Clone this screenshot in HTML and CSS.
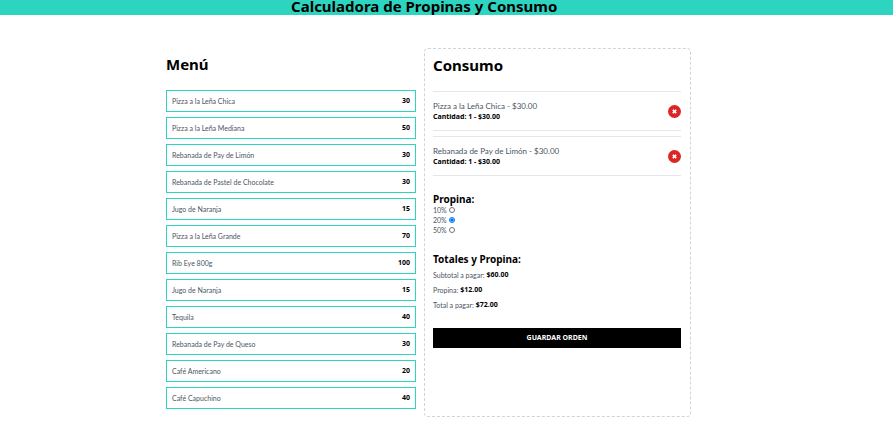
FILE: index.html
```html
<!DOCTYPE html>
<html lang="es">
<head>
<meta charset="utf-8">
<meta name="viewport" content="width=device-width, initial-scale=1">
<title>Calculadora de Propinas y Consumo</title>
<link rel="stylesheet" href="styles.css">
</head>
<body>
<header class="header">
  <h1 class="title">Calculadora de Propinas y Consumo</h1>
</header>
<main class="layout">
  <section class="menu">
    <h2 class="title">Menú</h2>
    <div class="menu-list">
      <button class="item" type="button"><span>Pizza a la Leña Chica</span><b>30</b></button>
      <button class="item" type="button"><span>Pizza a la Leña Mediana</span><b>50</b></button>
      <button class="item" type="button"><span>Rebanada de Pay de Limón</span><b>30</b></button>
      <button class="item" type="button"><span>Rebanada de Pastel de Chocolate</span><b>30</b></button>
      <button class="item" type="button"><span>Jugo de Naranja</span><b>15</b></button>
      <button class="item" type="button"><span>Pizza a la Leña Grande</span><b>70</b></button>
      <button class="item" type="button"><span>Rib Eye 800g</span><b>100</b></button>
      <button class="item" type="button"><span>Jugo de Naranja</span><b>15</b></button>
      <button class="item" type="button"><span>Tequila</span><b>40</b></button>
      <button class="item" type="button"><span>Rebanada de Pay de Queso</span><b>30</b></button>
      <button class="item" type="button"><span>Café Americano</span><b>20</b></button>
      <button class="item" type="button"><span>Café Capuchino</span><b>40</b></button>
    </div>
  </section>
  <section class="order">
    <h2 class="title">Consumo</h2>
    <ul class="order-list">
      <li class="order-item">
        <div>
          <p class="order-name">Pizza a la Leña Chica - $30.00</p>
          <p class="order-qty">Cantidad: 1 - $30.00</p>
        </div>
        <button class="remove" type="button" aria-label="Eliminar Pizza a la Leña Chica">
          <svg viewBox="0 0 6 6" aria-hidden="true"><path d="M1 1L5 5M5 1L1 5"/></svg>
        </button>
      </li>
      <li class="order-item">
        <div>
          <p class="order-name">Rebanada de Pay de Limón - $30.00</p>
          <p class="order-qty">Cantidad: 1 - $30.00</p>
        </div>
        <button class="remove" type="button" aria-label="Eliminar Rebanada de Pay de Limón">
          <svg viewBox="0 0 6 6" aria-hidden="true"><path d="M1 1L5 5M5 1L1 5"/></svg>
        </button>
      </li>
    </ul>
    <form class="checkout">
      <div class="tips">
        <h3 class="subtitle">Propina:</h3>
        <div class="tip"><label for="tip-10">10%</label><input id="tip-10" type="radio" name="tip" value="0.1"></div>
        <div class="tip"><label for="tip-20">20%</label><input id="tip-20" type="radio" name="tip" value="0.2" checked></div>
        <div class="tip"><label for="tip-50">50%</label><input id="tip-50" type="radio" name="tip" value="0.5"></div>
      </div>
      <div class="totals">
        <h3 class="subtitle">Totales y Propina:</h3>
        <p class="total"><span>Subtotal a pagar:</span> <b>$60.00</b></p>
        <p class="total"><span>Propina:</span> <b>$12.00</b></p>
        <p class="total"><span>Total a pagar:</span> <b>$72.00</b></p>
      </div>
      <button class="save" type="button">Guardar Orden</button>
    </form>
  </section>
</main>
</body>
</html>
```
FILE: styles.css
```css
* {
  box-sizing: border-box;
  margin: 0;
  padding: 0;
}

body {
  font-family: Lato, "Noto Sans", sans-serif;
  font-size: 7px;
  line-height: 10px;
  color: #4b5563;
  background: #fff;
}

button {
  font: inherit;
  color: inherit;
  cursor: pointer;
}

b,
.title,
.subtitle,
.order-qty,
.save {
  font-family: "Noto Sans", "Open Sans", sans-serif;
  font-weight: 700;
  color: #000;
}

.title {
  font-size: 15px;
  line-height: 15px;
}

.header {
  padding-right: 5%;
  text-align: center;
  background: #2dd4bf;
}

.header .title {
  padding-bottom: 2px;
  line-height: 13px;
}

.layout {
  display: grid;
  grid-template-columns: 250fr 267fr;
  gap: 8px;
  width: 525px;
  max-width: 100%;
  margin: 33px auto 18px;
  position: relative;
  right: 18px;
}

.menu {
  padding: 9px 0 8px;
}

.menu-list {
  display: grid;
  gap: 5px;
  margin-top: 18px;
}

.item {
  display: flex;
  justify-content: space-between;
  align-items: center;
  padding: 5px;
  border: 1px solid #2dd4bf;
  background: #fff;
}

.order {
  padding: 9px 9px 9px 8px;
  border: 1px dashed #cbd5e1;
  border-radius: 4px;
}

.order-list {
  display: grid;
  gap: 5px;
  margin-top: 18px;
  list-style: none;
}

.order-item {
  display: flex;
  justify-content: space-between;
  align-items: center;
  padding: 8px 0;
  border: solid #e5e7eb;
  border-width: 1px 0;
}

.order-name {
  font-size: 8px;
  line-height: 12px;
}

.remove {
  display: grid;
  place-items: center;
  width: 13px;
  height: 13px;
  border: 0;
  border-radius: 50%;
  background: #dc2626;
}

.remove svg {
  width: 5px;
  height: 5px;
  stroke: #fff;
  stroke-width: 2;
}

.checkout {
  display: grid;
  gap: 18px;
  margin-top: 17px;
}

.subtitle {
  font-size: 10px;
  line-height: 12px;
}

.tip {
  display: flex;
  align-items: center;
  gap: 2px;
}

.tip input {
  width: 6px;
  height: 6px;
}

.totals {
  display: grid;
  gap: 5px;
}

.total {
  display: flex;
  gap: 2px;
}

.save {
  padding: 5px;
  border: 0;
  text-transform: uppercase;
  color: #fff;
  background: #000;
}
```
